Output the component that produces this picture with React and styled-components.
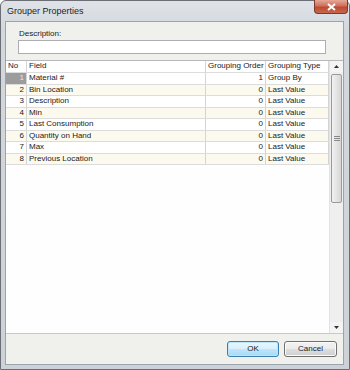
import React from "react";
import styled, { createGlobalStyle } from "styled-components";

const GlobalStyle = createGlobalStyle`
  html, body {
    margin: 0;
    padding: 0;
    background: #ffffff;
  }
  body {
    font-family: "Liberation Sans", Arial, sans-serif;
  }
  * {
    box-sizing: border-box;
  }
`;

const Window = styled.div`
  width: 350px;
  height: 370px;
  display: flex;
  flex-direction: column;
  border: 1px solid #6b6f74;
  border-radius: 6px 6px 0 0;
  background: linear-gradient(180deg, #dfe3e8 0%, #d3d8de 8%, #cdd2d8 100%);
  padding: 0 5px 4px 4px;
`;

const TitleBar = styled.div`
  height: 20px;
  display: flex;
  align-items: flex-start;
  justify-content: space-between;
`;

const Title = styled.span`
  font-size: 9px;
  color: #1e1e1e;
  margin: 5px 0 0 2px;
`;

const CloseButton = styled.div`
  width: 34px;
  height: 14px;
  margin-top: -1px;
  margin-right: -4px;
  border: 1px solid #7a3a2e;
  border-top: none;
  border-radius: 0 0 4px 4px;
  background: linear-gradient(180deg, #e4a89a 0%, #d0705a 45%, #bd4a33 55%, #c9664d 100%);
  display: flex;
  align-items: center;
  justify-content: center;
`;

const Client = styled.div`
  flex: 1;
  display: flex;
  flex-direction: column;
  border: 1px solid #9ba3ad;
  background: #f0f0ed;
`;

const DescSection = styled.div`
  padding: 7px 17px 6px 12px;
  display: flex;
  flex-direction: column;
  gap: 2px;
`;

const Label = styled.label`
  font-size: 8px;
  color: #222;
  margin-left: 1px;
`;

const TextInput = styled.div`
  height: 14px;
  border: 1px solid #abadb3;
  background: #fff;
`;

const Grid = styled.div`
  flex: 1;
  display: flex;
  background: #fefefe;
  border-top: 1px solid #b8b8b8;
  border-bottom: 1px solid #c9c9c9;
`;

const Table = styled.div`
  flex: 1;
  display: flex;
  flex-direction: column;
`;

const Row = styled.div`
  display: grid;
  grid-template-columns: 21px 179px 60px 63px;
  height: ${(p) => (p.$header ? "12px" : "11.5px")};
  flex-shrink: 0;
  background: ${(p) => (p.$alt ? "#fcfaef" : "#ffffff")};
  border-bottom: 1px solid #dcdcdc;
`;

const Cell = styled.div`
  font-size: 8px;
  line-height: 10.5px;
  padding: 0 2px;
  white-space: nowrap;
  overflow: hidden;
  text-align: ${(p) => (p.$right ? "right" : "left")};
  border-right: 1px solid #d4d4d4;
  background: ${(p) => (p.$marker ? "#9c9c9c" : "transparent")};
  color: ${(p) => (p.$marker ? "#e8e8e8" : "#1a1a1a")};
`;

const Scrollbar = styled.div`
  width: 14px;
  display: flex;
  flex-direction: column;
  background: #efefef;
  border-left: 1px solid #e2e2e2;
`;

const Arrow = styled.div`
  height: 11px;
  display: flex;
  align-items: center;
  justify-content: center;
  background: #f4f4f4;
`;

const Thumb = styled.div`
  margin: 2px 1px 0 1px;
  height: 129px;
  border: 1px solid #9a9a9a;
  border-radius: 2px;
  background: linear-gradient(90deg, #f2f2f2 0%, #e4e4e4 50%, #d6d6d6 100%);
  display: flex;
  align-items: center;
  justify-content: center;
`;

const Track = styled.div`
  flex: 1;
`;

const Footer = styled.div`
  height: 30px;
  display: flex;
  align-items: center;
  justify-content: flex-end;
  gap: 5px;
  padding-right: 6px;
  padding-bottom: 1px;
`;

const Button = styled.div`
  width: ${(p) => (p.$wide ? "53px" : "52px")};
  height: 16px;
  border-radius: 3px;
  display: flex;
  align-items: center;
  justify-content: center;
  font-size: 8px;
  color: #1a1a1a;
  border: 1px solid ${(p) => (p.$primary ? "#3c7fb1" : "#707070")};
  background: ${(p) =>
    p.$primary
      ? "linear-gradient(180deg, #eaf6fd 0%, #d9f0fc 50%, #bee6fd 52%, #a7d9f5 100%)"
      : "linear-gradient(180deg, #f2f2f2 0%, #ebebeb 50%, #dddddd 52%, #cfcfcf 100%)"};
  box-shadow: inset 0 0 0 1px ${(p) => (p.$primary ? "#bde6fb" : "#fafafa")};
`;

const rows = [
  ["Material #", 1, "Group By"],
  ["Bin Location", 0, "Last Value"],
  ["Description", 0, "Last Value"],
  ["Min", 0, "Last Value"],
  ["Last Consumption", 0, "Last Value"],
  ["Quantity on Hand", 0, "Last Value"],
  ["Max", 0, "Last Value"],
  ["Previous Location", 0, "Last Value"],
];

const App = () => {
  return (
    <>
      <GlobalStyle />
      <Window>
        <TitleBar>
          <Title>Grouper Properties</Title>
          <CloseButton>
            <svg width="9" height="8" viewBox="0 0 9 8">
              <path d="M1 1 L8 7 M8 1 L1 7" stroke="#fff" strokeWidth="2" />
            </svg>
          </CloseButton>
        </TitleBar>
        <Client>
          <DescSection>
            <Label>Description:</Label>
            <TextInput />
          </DescSection>
          <Grid>
            <Table>
              <Row $header>
                <Cell>No</Cell>
                <Cell>Field</Cell>
                <Cell>Grouping Order</Cell>
                <Cell>Grouping Type</Cell>
              </Row>
              {rows.map(([field, order, type], index) => (
                <Row key={index} $alt={index % 2 === 1}>
                  <Cell $right $marker={index === 0}>
                    {index + 1}
                  </Cell>
                  <Cell>{field}</Cell>
                  <Cell $right>{order}</Cell>
                  <Cell>{type}</Cell>
                </Row>
              ))}
            </Table>
            <Scrollbar>
              <Arrow>
                <svg width="5" height="3" viewBox="0 0 5 3">
                  <path d="M0 3 L2.5 0 L5 3 Z" fill="#333" />
                </svg>
              </Arrow>
              <Thumb>
                <svg width="6" height="5" viewBox="0 0 6 5">
                  <path d="M0 0.5 H6 M0 2.5 H6 M0 4.5 H6" stroke="#888" strokeWidth="1" />
                </svg>
              </Thumb>
              <Track />
              <Arrow>
                <svg width="5" height="3" viewBox="0 0 5 3">
                  <path d="M0 0 L2.5 3 L5 0 Z" fill="#333" />
                </svg>
              </Arrow>
            </Scrollbar>
          </Grid>
          <Footer>
            <Button $primary>OK</Button>
            <Button $wide>Cancel</Button>
          </Footer>
        </Client>
      </Window>
    </>
  );
};

export default App;
